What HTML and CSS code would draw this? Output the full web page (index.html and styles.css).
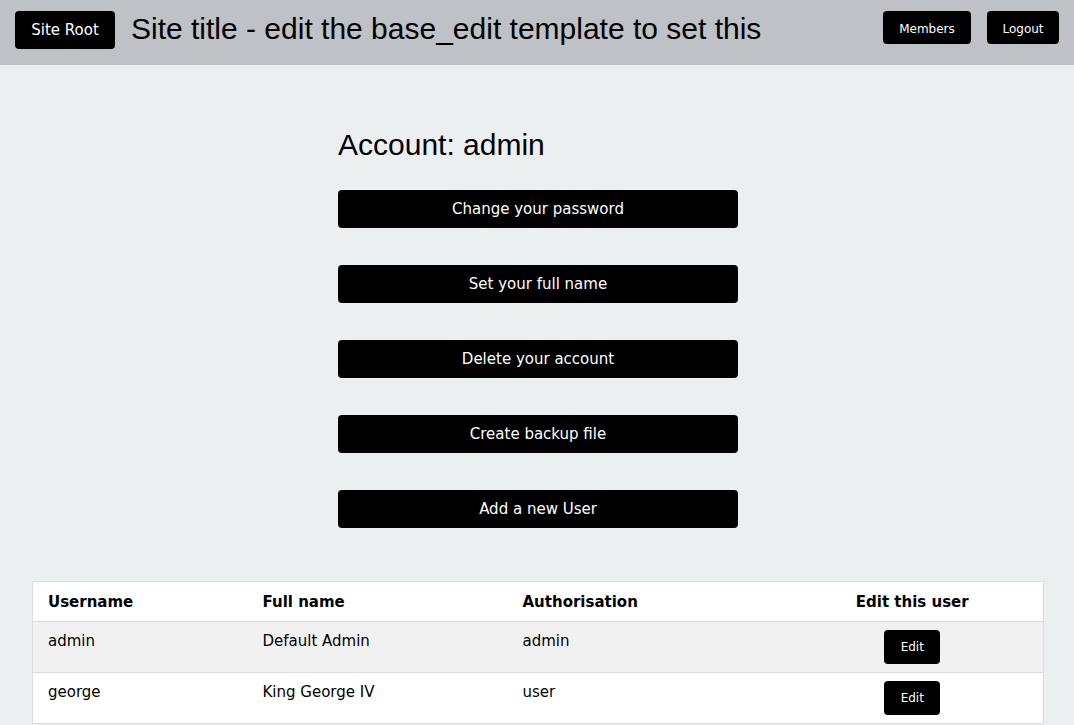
FILE: index.html
```html
<!DOCTYPE html>
<html lang="en">
<head>
<meta charset="utf-8">
<title>Account</title>
<link rel="stylesheet" href="styles.css">
</head>
<body>
<header class="topbar">
  <a class="btn btn-root" href="#">Site Root</a>
  <h1 class="site-title">Site title - edit the base_edit template to set this</h1>
  <nav class="topnav">
    <a class="btn btn-small btn-members" href="#">Members</a>
    <a class="btn btn-small btn-logout" href="#">Logout</a>
  </nav>
</header>
<main class="main">
  <section class="account">
    <h2 class="account-title">Account: admin</h2>
    <a class="btn btn-wide" href="#">Change your password</a>
    <a class="btn btn-wide" href="#">Set your full name</a>
    <a class="btn btn-wide" href="#">Delete your account</a>
    <a class="btn btn-wide" href="#">Create backup file</a>
    <a class="btn btn-wide" href="#">Add a new User</a>
  </section>
  <table class="users">
    <colgroup>
      <col class="c1"><col class="c2"><col class="c3"><col class="c4">
    </colgroup>
    <thead>
      <tr><th>Username</th><th>Full name</th><th>Authorisation</th><th class="center">Edit this user</th></tr>
    </thead>
    <tbody>
      <tr class="odd"><td>admin</td><td>Default Admin</td><td>admin</td><td class="center"><a class="btn btn-edit" href="#">Edit</a></td></tr>
      <tr><td>george</td><td>King George IV</td><td>user</td><td class="center"><a class="btn btn-edit" href="#">Edit</a></td></tr>
    </tbody>
  </table>
</main>
</body>
</html>
```

FILE: styles.css
```css
html, body {
  margin: 0;
  padding: 0;
}
body {
  background: #ebeff0;
  font-family: "DejaVu Sans", sans-serif;
  color: #000;
}
.btn {
  display: inline-flex;
  align-items: center;
  justify-content: center;
  background: #000;
  color: #fff;
  text-decoration: none;
  border-radius: 4px;
  box-sizing: border-box;
}
.topbar {
  display: flex;
  align-items: flex-start;
  background: #bec2c6;
  height: 65px;
  box-sizing: border-box;
  padding: 11px 15px 0 15px;
}
.btn-root {
  width: 100px;
  height: 38px;
  font-size: 15px;
}
.site-title {
  margin: 0 0 0 16px;
  font-family: "Liberation Sans", Arial, sans-serif;
  font-weight: normal;
  font-size: 30px;
  line-height: 36px;
  flex: 1;
}
.topnav {
  display: flex;
  gap: 16px;
}
.btn-small {
  height: 33px;
  font-size: 12px;
  padding-top: 2px;
}
.btn-members {
  width: 88px;
}
.btn-logout {
  width: 72px;
}
.main {
  padding: 0 30px 0 32px;
}
.account {
  width: 400px;
  margin: 0 auto;
  display: flex;
  flex-direction: column;
  gap: 37px;
}
.account-title {
  font-family: "Liberation Sans", Arial, sans-serif;
  font-weight: normal;
  font-size: 30px;
  line-height: 35px;
  margin: 62px 0 -9px 0;
}
.btn-wide {
  height: 38px;
  font-size: 15px;
}
.users {
  width: 100%;
  margin-top: 53px;
  border-collapse: collapse;
  table-layout: fixed;
  background: #fff;
  border: 1px solid #dcdcdc;
  font-size: 15px;
}
.c1 { width: 215px; }
.c2 { width: 260px; }
.c3 { width: 274px; }
.users th, .users td {
  text-align: left;
  vertical-align: top;
  padding: 9px 15px 7px 15px;
  line-height: 23px;
  border-top: 1px solid #dcdcdc;
}
.users td {
  padding-top: 8px;
  padding-bottom: 8px;
}
.users th {
  font-weight: bold;
}
.users .center {
  text-align: center;
}
.users tr.odd td {
  background: #f1f1f1;
}
.btn-edit {
  width: 56px;
  height: 34px;
  font-size: 12px;
}
```
